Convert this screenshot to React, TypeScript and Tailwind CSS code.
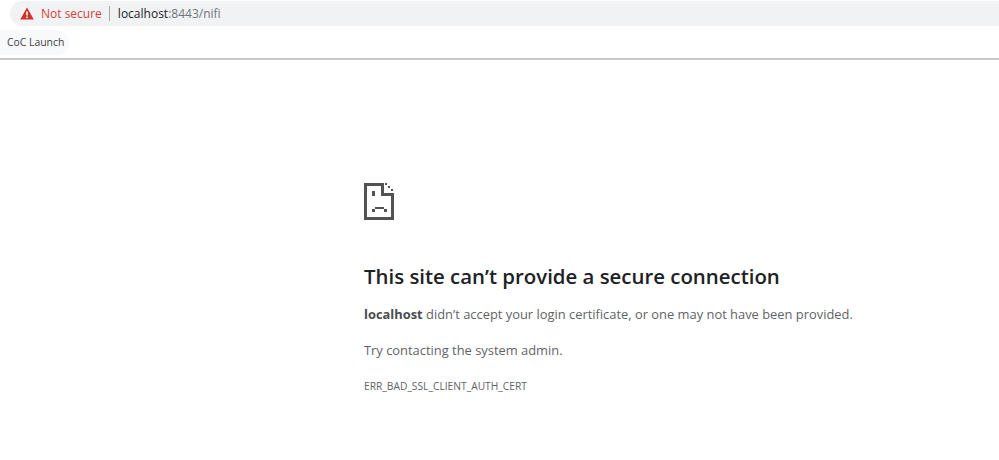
function SadFile() {
  return (
    <svg width="30" height="37" viewBox="0 0 30 37" shapeRendering="crispEdges" fill="#525254">
      <path d="M0 0h20v3H3v31h24V13h3v24H0z" />
      <path d="M17 0h3v10h10v3H17z" />
      <path d="M21 0h2v2h-2zM24 3h2v2h-2zM27 6h2v2h-2z" />
      <path d="M8 8h3v5H8z" />
      <path d="M11 24h9v2h-9zM8 26h3v3H8zM20 26h3v3h-3z" />
    </svg>
  );
}

export default function App() {
  return (
    <div className="w-[999px] h-[460px] bg-white overflow-hidden font-['Open_Sans',sans-serif]">
      <div className="h-[60px] border-b-2 border-[#c9c9c9] pt-px">
        <div className="ml-[10px] h-[25px] bg-[#f0f2f4] rounded-l-full flex items-center pl-[10px]">
          <svg width="14" height="13" viewBox="0 0 14 13">
            <path d="M7 0.5 13.8 12.5H0.2z" fill="#d3302a" />
            <rect x="6.2" y="4.5" width="1.6" height="4" fill="#fff" />
            <rect x="6.2" y="9.5" width="1.6" height="1.6" fill="#fff" />
          </svg>
          <span className="ml-[7px] text-[12px] text-[#d8403a]">Not secure</span>
          <span className="ml-[7px] w-px h-[15px] bg-[#a5a7aa]"></span>
          <span className="ml-2 text-[12px] text-[#202124]">
            localhost<span className="text-[#70757a]">:8443/nifi</span>
          </span>
        </div>
        <div className="mt-[4px] w-[69px] h-[25px] bg-[#f8f9fa] rounded-r-full flex items-center pl-[7px]">
          <span className="text-[10.4px] text-[#3c4043] whitespace-nowrap">CoC Launch</span>
        </div>
      </div>

      <div className="pl-[364px] pt-[123px]">
        <SadFile />
        <h1 className="mt-[42px] text-[20.4px] leading-[28px] font-semibold text-[#202124] whitespace-nowrap">
          This site can’t provide a secure connection
        </h1>
        <p className="mt-[14px] text-[12.9px] leading-[20px] text-[#5f6368] whitespace-nowrap">
          <b className="font-bold text-[#4a4d51]">localhost</b> didn’t accept your login certificate, or one may not have been provided.
        </p>
        <p className="mt-[16px] text-[12.9px] leading-[20px] text-[#5f6368]">Try contacting the system admin.</p>
        <p className="mt-[19px] text-[10.25px] leading-[14px] text-[#5f6368]">ERR_BAD_SSL_CLIENT_AUTH_CERT</p>
      </div>
    </div>
  );
}
